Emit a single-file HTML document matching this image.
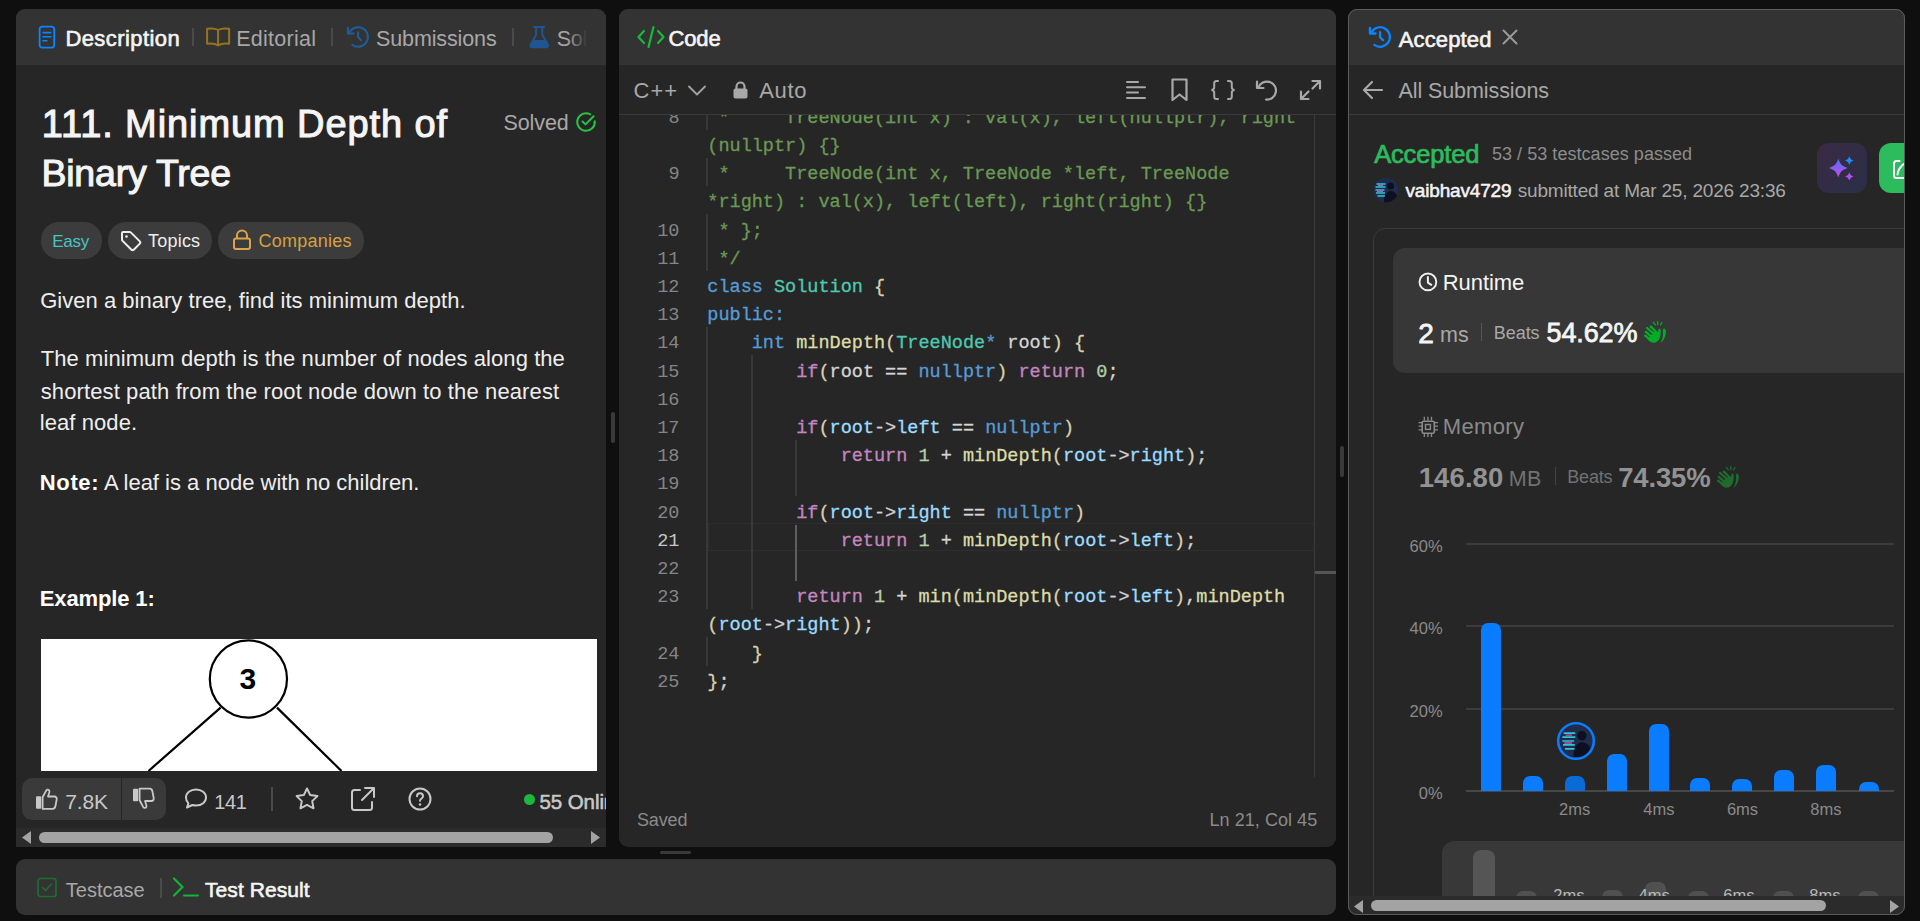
<!DOCTYPE html>
<html><head><meta charset="utf-8"><title>LeetCode</title>
<style>
html,body{margin:0;padding:0;width:1920px;height:921px;overflow:hidden;background:#0f0f0f;font-family:"Liberation Sans",sans-serif;}
.r{position:absolute;box-sizing:border-box;}
.t{position:absolute;white-space:pre;line-height:1;}
.cd span{-webkit-text-stroke:0.3px currentColor;}
</style></head><body>

<div class="r" style="left:16px;top:9px;width:590px;height:838px;background:#262626;border-radius:9px 9px 0 0;overflow:hidden;"></div>
<div class="r" style="left:16px;top:9px;width:590px;height:56px;background:#333333;border-radius:9px 9px 0 0;"></div>
<div class="r" style="left:16px;top:828px;width:590px;height:19px;background:#2b2b2b;"></div>
<svg class="r" style="left:38px;top:25px;" width="18" height="24" viewBox="0 0 18 24" fill="none"><rect x="1.6" y="1.7" width="14.6" height="21" rx="2.6" stroke="#0a84ff" stroke-width="1.8"/><path d="M5 7.6h7.8M5 11.75h7.8M5 15.8h3.9" stroke="#0a84ff" stroke-width="1.6" stroke-linecap="round"/></svg>
<div class="t" style="left:65.40px;top:28.37px;font-size:22px;letter-spacing:0.427px;color:#f5f5f5;font-weight:400;-webkit-text-stroke:0.62px #f5f5f5;">Description</div>
<div class="r" style="left:192px;top:28px;width:2px;height:18px;background:#4a4a4a;"></div>
<svg class="r" style="left:205px;top:27px;" width="26" height="21" viewBox="0 0 26 21" fill="none"><path d="M13.1 3C10 1.2 6 1.2 2.1 1.8V16.7C6 16.2 10 16.4 13.1 18.4 16.2 16.4 20.2 16.2 24.1 16.7V1.8C20.2 1.2 16.2 1.2 13.1 3ZM13.1 3V18.4" stroke="#94741f" stroke-width="2" stroke-linejoin="round"/></svg>
<div class="t" style="left:236.23px;top:28.80px;font-size:21.5px;letter-spacing:0.257px;color:#a8a8a8;font-weight:400;">Editorial</div>
<div class="r" style="left:331px;top:28px;width:2px;height:18px;background:#4a4a4a;"></div>
<svg class="r" style="left:340px;top:20px;" width="30" height="30" viewBox="0 0 30 30" fill="none"><path d="M9.61 12.1A9.8 9.8 0 1 1 12.34 24.93" stroke="#1f5c9c" stroke-width="2.1" stroke-linecap="round"/><path d="M7.9 7.9V13.5H13.6" stroke="#1f5c9c" stroke-width="2.1" stroke-linecap="round" stroke-linejoin="round"/><path d="M18.1 12.2V17.2L21 20.1" stroke="#1f5c9c" stroke-width="2.1" stroke-linecap="round" stroke-linejoin="round"/></svg>
<div class="t" style="left:376.03px;top:28.80px;font-size:21.5px;letter-spacing:-0.119px;color:#a8a8a8;font-weight:400;">Submissions</div>
<div class="r" style="left:512px;top:28px;width:2px;height:18px;background:#4a4a4a;"></div>
<svg class="r" style="left:520px;top:20px;" width="40" height="34" viewBox="0 0 40 34" fill="none"><path d="M14 7H24.2" stroke="#1f5592" stroke-width="2" stroke-linecap="round"/><path d="M16.1 7.5V14.8L10.8 24.5C10 26 10.8 27.2 12.4 27.2H26.2C27.8 27.2 28.6 26 27.8 24.5L22.3 14.8V7.5" stroke="#1f5592" stroke-width="2" stroke-linejoin="round"/><path d="M13.6 19.9H24.8L28.3 25.2C29 26.5 28.1 27.9 26.5 27.9H12C10.4 27.9 9.6 26.5 10.3 25.2Z" fill="#1f5592"/></svg>
<div class="t" style="left:556.63px;top:28.80px;font-size:21.5px;letter-spacing:-0.124px;color:#a8a8a8;font-weight:400;">Sol</div>
<div class="r" style="left:566px;top:15px;width:40px;height:45px;background:linear-gradient(90deg,rgba(51,51,51,0) 0px,rgba(51,51,51,0.5) 12px,#333 21px);"></div>
<div class="t" style="left:41.68px;top:105.03px;font-size:38px;letter-spacing:0.914px;color:#f5f5f5;font-weight:400;-webkit-text-stroke:1.06px #f5f5f5;">111. Minimum Depth of</div>
<div class="t" style="left:41.43px;top:154.65px;font-size:37.5px;letter-spacing:-0.208px;color:#f5f5f5;font-weight:400;-webkit-text-stroke:1.05px #f5f5f5;">Binary Tree</div>
<div class="t" style="left:503.43px;top:112.70px;font-size:21.5px;letter-spacing:-0.085px;color:#a8a8a8;font-weight:400;">Solved</div>
<svg class="r" style="left:570px;top:106px;" width="32" height="32" viewBox="0 0 32 32" fill="none"><path d="M24.77 15.23A8.8 8.8 0 1 1 20.27 8.3" stroke="#28c244" stroke-width="2" stroke-linecap="round"/><path d="M12.5 15.5l3 2.9 8.1-8.15" stroke="#28c244" stroke-width="2" stroke-linecap="round" stroke-linejoin="round"/></svg>
<div class="r" style="left:41px;top:222px;width:61px;height:37px;background:#3c3c3c;border-radius:18px;"></div>
<div class="t" style="left:52.30px;top:233.01px;font-size:17px;letter-spacing:-0.279px;color:#46c6c2;font-weight:400;">Easy</div>
<div class="r" style="left:108px;top:222px;width:104px;height:37px;background:#3c3c3c;border-radius:18px;"></div>
<svg class="r" style="left:120px;top:230px;" width="22" height="22" viewBox="0 0 22 22" fill="none"><path d="M2 3.2v6.3c0 .5.2 1 .6 1.4l8.6 8.6c.8.8 2 .8 2.8 0l5.6-5.6c.8-.8.8-2 0-2.8L11 2.6c-.4-.4-.9-.6-1.4-.6H3.2C2.5 2 2 2.5 2 3.2z" stroke="#eee" stroke-width="2"/><circle cx="6.5" cy="6.5" r="1.3" fill="#eee"/></svg>
<div class="t" style="left:148.09px;top:232.16px;font-size:18px;letter-spacing:0.201px;color:#eeeeee;font-weight:400;">Topics</div>
<div class="r" style="left:218px;top:222px;width:146px;height:37px;background:#3c3c3c;border-radius:18px;"></div>
<svg class="r" style="left:232px;top:229px;" width="20" height="22" viewBox="0 0 20 22" fill="none"><path d="M5 9.5V6.5a5 5 0 0 1 10 0v3" stroke="#dca449" stroke-width="2"/><rect x="2" y="9.5" width="16" height="10.5" rx="2" stroke="#dca449" stroke-width="2"/></svg>
<div class="t" style="left:258.40px;top:232.16px;font-size:18px;letter-spacing:0.249px;color:#d9a040;font-weight:400;">Companies</div>
<div class="t" style="left:40.20px;top:290.07px;font-size:22px;letter-spacing:0.025px;color:#eeeeee;font-weight:400;">Given a binary tree, find its minimum depth.</div>
<div class="t" style="left:40.80px;top:347.67px;font-size:22px;letter-spacing:0.063px;color:#eeeeee;font-weight:400;">The minimum depth is the number of nodes along the</div>
<div class="t" style="left:40.70px;top:381.27px;font-size:22px;letter-spacing:0.118px;color:#eeeeee;font-weight:400;">shortest path from the root node down to the nearest</div>
<div class="t" style="left:39.81px;top:412.37px;font-size:22px;letter-spacing:0.070px;color:#eeeeee;font-weight:400;">leaf node.</div>
<div class="t" style="left:39.81px;top:471.57px;font-size:22px;letter-spacing:0.641px;color:#ffffff;font-weight:700;">Note:</div>
<div class="t" style="left:103.94px;top:471.57px;font-size:22px;letter-spacing:0.000px;color:#eeeeee;font-weight:400;">A leaf is a node with no children.</div>
<div class="t" style="left:39.81px;top:588.07px;font-size:22px;letter-spacing:-0.132px;color:#ffffff;font-weight:700;">Example 1:</div>
<div class="r" style="left:41px;top:639px;width:556px;height:132px;background:#ffffff;"></div>
<svg class="r" style="left:41px;top:639px;" width="556" height="132" viewBox="0 0 556 132" fill="none"><circle cx="207.4" cy="40" r="38.6" stroke="#000" stroke-width="2.2"/><path d="M179.6 68.6L107.5 132M236 68.6L300.5 132" stroke="#000" stroke-width="2.2"/></svg>
<div class="t" style="left:239.52px;top:663.90px;font-size:30px;letter-spacing:0.475px;color:#000000;font-weight:700;">3</div>
<div class="r" style="left:22px;top:778px;width:144px;height:42px;background:#3a3a3a;border-radius:10px;"></div>
<div class="r" style="left:121px;top:778px;width:1px;height:42px;background:#262626;"></div>
<svg class="r" style="left:34px;top:786px;" width="26" height="26" viewBox="0 0 26 26" fill="none"><rect x="2" y="10.3" width="5.2" height="12.5" rx="1" fill="#c8c8c8"/><path d="M8.6 11.2L12.3 4.4C13 3.2 14.8 3.3 15.3 4.6 15.6 5.5 15.4 6.5 15 7.5L14 10.5H20.5C22 10.5 23 11.8 22.7 13.3L21.4 20.3C21.1 21.7 20 22.8 18.6 22.8H8.6Z" stroke="#c8c8c8" stroke-width="1.8" stroke-linejoin="round"/></svg>
<div class="t" style="left:65.25px;top:791.12px;font-size:21px;letter-spacing:-0.132px;color:#c8c8c8;font-weight:400;">7.8K</div>
<svg class="r" style="left:131px;top:783px;" width="26" height="28" viewBox="0 0 26 28" fill="none"><g transform="translate(0,28.5) scale(1,-1)"><rect x="2" y="10.3" width="5.2" height="12.5" rx="1" fill="#c8c8c8"/><path d="M8.6 11.2L12.3 4.4C13 3.2 14.8 3.3 15.3 4.6 15.6 5.5 15.4 6.5 15 7.5L14 10.5H20.5C22 10.5 23 11.8 22.7 13.3L21.4 20.3C21.1 21.7 20 22.8 18.6 22.8H8.6Z" stroke="#c8c8c8" stroke-width="1.8" stroke-linejoin="round"/></g></svg>
<svg class="r" style="left:184px;top:787px;" width="26" height="24" viewBox="0 0 26 24" fill="none"><path d="M12 2.5c5.8 0 10 3.6 10 8s-4.2 8-10 8c-1.3 0-2.6-.2-3.7-.5L3 20.5l1.4-4.1C2.9 14.9 2 12.8 2 10.5c0-4.4 4.2-8 10-8z" stroke="#c8c8c8" stroke-width="2" stroke-linejoin="round"/></svg>
<div class="t" style="left:214.20px;top:791.97px;font-size:20px;letter-spacing:-0.400px;color:#c8c8c8;font-weight:400;">141</div>
<div class="r" style="left:271px;top:787px;width:2px;height:24px;background:#4a4a4a;"></div>
<svg class="r" style="left:294px;top:786px;" width="26" height="26" viewBox="0 0 26 26" fill="none"><path d="M13 2.5l3.2 6.6 7.2 1-5.2 5 1.3 7.2L13 18.9l-6.5 3.4 1.3-7.2-5.2-5 7.2-1z" stroke="#c8c8c8" stroke-width="2" stroke-linejoin="round"/></svg>
<svg class="r" style="left:350px;top:786px;" width="26" height="26" viewBox="0 0 26 26" fill="none"><path d="M10 4H4.5C3.1 4 2 5.1 2 6.5v15C2 22.9 3.1 24 4.5 24h15c1.4 0 2.5-1.1 2.5-2.5V16M15 2h9v9M24 2L12 14" stroke="#c8c8c8" stroke-width="2" stroke-linecap="round" stroke-linejoin="round"/></svg>
<svg class="r" style="left:407px;top:786px;" width="26" height="26" viewBox="0 0 26 26" fill="none"><circle cx="13" cy="13" r="10.5" stroke="#c8c8c8" stroke-width="2"/><path d="M10 10.2c0-1.7 1.3-3 3-3s3 1.3 3 3c0 2.2-3 2.3-3 4.6" stroke="#c8c8c8" stroke-width="2" stroke-linecap="round"/><circle cx="13" cy="18.5" r="1.2" fill="#c8c8c8"/></svg>
<div class="r" style="left:524px;top:794px;width:11px;height:11px;background:#1cb83e;border-radius:50%;"></div>
<div class="r" style="left:536px;top:780px;width:70px;height:40px;overflow:hidden;">
<div class="t" style="left:3.46px;top:11.54px;font-size:20.5px;letter-spacing:-0.077px;color:#c8c8c8;font-weight:400;-webkit-text-stroke:0.57px #c8c8c8;">55 Online</div>
</div>
<svg class="r" style="left:22px;top:831px;" width="10" height="13" viewBox="0 0 10 13" fill="none"><path d="M9 0v13L0 6.5z" fill="#a3a3a3"/></svg>
<div class="r" style="left:39px;top:832px;width:514px;height:11px;background:#a3a3a3;border-radius:6px;"></div>
<svg class="r" style="left:591px;top:831px;" width="10" height="13" viewBox="0 0 10 13" fill="none"><path d="M0 0v13L9 6.5z" fill="#a3a3a3"/></svg>
<div class="r" style="left:611px;top:412px;width:4px;height:31px;background:#3a3a3a;border-radius:2px;"></div>
<div class="r" style="left:1340px;top:446px;width:4px;height:31px;background:#3a3a3a;border-radius:2px;"></div>
<div class="r" style="left:660px;top:851px;width:31px;height:3px;background:#3a3a3a;border-radius:2px;"></div>
<div class="r" style="left:16px;top:859px;width:1320px;height:56px;background:#333333;border-radius:9px;"></div>
<svg class="r" style="left:37px;top:877px;" width="20" height="21" viewBox="0 0 20 21" fill="none"><rect x="1" y="1.5" width="18" height="18" rx="2.5" stroke="#1b6e30" stroke-width="1.7"/><path d="M5.5 10.5l3 3 6-6.5" stroke="#1b6e30" stroke-width="1.7" stroke-linecap="round" stroke-linejoin="round"/></svg>
<div class="t" style="left:65.85px;top:880.17px;font-size:20px;letter-spacing:-0.014px;color:#a8a8a8;font-weight:400;">Testcase</div>
<div class="r" style="left:160px;top:878px;width:2px;height:20px;background:#4a4a4a;"></div>
<svg class="r" style="left:172px;top:877px;" width="28" height="22" viewBox="0 0 28 22" fill="none"><path d="M2 1.5l8.5 8.5-8.5 8.5" stroke="#10b536" stroke-width="2.2" stroke-linecap="round" stroke-linejoin="round"/><path d="M12 18.5h14" stroke="#10b536" stroke-width="2.2" stroke-linecap="round"/></svg>
<div class="t" style="left:205.02px;top:879.32px;font-size:21px;letter-spacing:0.080px;color:#f5f5f5;font-weight:400;-webkit-text-stroke:0.59px #f5f5f5;">Test Result</div>
<div class="r" style="left:619px;top:9px;width:717px;height:838px;background:#262626;border-radius:9px;overflow:hidden;"></div>
<div class="r" style="left:619px;top:9px;width:717px;height:56px;background:#333333;border-radius:9px 9px 0 0;"></div>
<svg class="r" style="left:636px;top:25px;" width="30" height="24" viewBox="0 0 30 24" fill="none"><path d="M8 6L2.5 12 8 18M22 6l5.5 6L22 18M17.5 2L12.5 22" stroke="#1bb83a" stroke-width="2.2" stroke-linecap="round" stroke-linejoin="round"/></svg>
<div class="t" style="left:668.51px;top:27.77px;font-size:22px;letter-spacing:-0.155px;color:#f5f5f5;font-weight:400;-webkit-text-stroke:0.62px #f5f5f5;">Code</div>
<div class="t" style="left:633.50px;top:80.27px;font-size:22px;letter-spacing:1.010px;color:#a8a8a8;font-weight:400;">C++</div>
<svg class="r" style="left:688px;top:85px;" width="18" height="11" viewBox="0 0 18 11" fill="none"><path d="M1 1.5l8 8 8-8" stroke="#a3a3a3" stroke-width="1.8" stroke-linecap="round" stroke-linejoin="round"/></svg>
<svg class="r" style="left:733px;top:81px;" width="15" height="18" viewBox="0 0 15 18" fill="none"><path d="M3.5 8V5.5a4 4 0 0 1 8 0V8" stroke="#a8a8a8" stroke-width="2.2"/><rect x="0.5" y="7.5" width="14" height="10" rx="2" fill="#a8a8a8"/></svg>
<div class="t" style="left:759.25px;top:80.27px;font-size:22px;letter-spacing:0.642px;color:#a8a8a8;font-weight:400;">Auto</div>
<svg class="r" style="left:1125px;top:79px;" width="22" height="22" viewBox="0 0 22 22" fill="none"><path d="M2 3h11M2 8.3h18M2 13.6h11M2 19h18" stroke="#a8a8a8" stroke-width="2" stroke-linecap="round"/></svg>
<svg class="r" style="left:1170px;top:77px;" width="20" height="26" viewBox="0 0 20 26" fill="none"><path d="M2.5 2.5h14v20.5l-7-5.5-7 5.5z" stroke="#a8a8a8" stroke-width="2.2" stroke-linejoin="round"/></svg>
<svg class="r" style="left:1209px;top:79px;" width="28" height="22" viewBox="0 0 28 22" fill="none"><path d="M9 2H7.5C6 2 5.2 3 5.2 4.5v3.8c0 1.3-.8 2.4-2.7 2.7 1.9.3 2.7 1.4 2.7 2.7v3.8C5.2 19 6 20 7.5 20H9M19 2h1.5C22 2 22.8 3 22.8 4.5v3.8c0 1.3.8 2.4 2.7 2.7-1.9.3-2.7 1.4-2.7 2.7v3.8C22.8 19 22 20 20.5 20H19" stroke="#a8a8a8" stroke-width="2" stroke-linecap="round"/></svg>
<svg class="r" style="left:1254px;top:78px;" width="24" height="24" viewBox="0 0 24 24" fill="none"><path d="M4.5 9.5A9 9 0 1 1 12 21.5" stroke="#a8a8a8" stroke-width="2.2" stroke-linecap="round"/><path d="M3 3.5v6.5h6.5" stroke="#a8a8a8" stroke-width="2.2" stroke-linecap="round" stroke-linejoin="round"/></svg>
<svg class="r" style="left:1299px;top:79px;" width="23" height="22" viewBox="0 0 23 22" fill="none"><path d="M13.5 2h7.5v7.5M21 2l-7.5 7.5M9.5 20H2v-7.5M2 20l7.5-7.5" stroke="#a8a8a8" stroke-width="2.2" stroke-linecap="round" stroke-linejoin="round"/></svg>
<div class="r" style="left:619px;top:114px;width:717px;height:1px;background:#3a3a3a;"></div>
<div class="r" style="left:619px;top:115px;width:696px;height:662px;overflow:hidden;">
<div class="r" style="left:88.79999999999995px;top:408.1px;width:607.2px;height:28.200000000000045px;background:transparent;border:1px solid #2e2e2e;"></div>
<div class="r" style="left:87px;top:-13.400000000000006px;width:2px;height:28.19999999999999px;background:#383838;"></div>
<div class="r" style="left:87px;top:43.0px;width:2px;height:28.19999999999999px;background:#383838;"></div>
<div class="r" style="left:87px;top:99.39999999999998px;width:2px;height:56.39999999999998px;background:#383838;"></div>
<div class="r" style="left:87px;top:212.2px;width:2px;height:281.99999999999994px;background:#383838;"></div>
<div class="r" style="left:87px;top:522.4px;width:2px;height:28.200000000000045px;background:#383838;"></div>
<div class="r" style="left:132px;top:240.39999999999998px;width:2px;height:253.79999999999995px;background:#383838;"></div>
<div class="r" style="left:176px;top:325.0px;width:2px;height:56.39999999999998px;background:#383838;"></div>
<div class="r" style="left:176px;top:409.6px;width:2px;height:56.39999999999998px;background:#5e5e5e;"></div>
<div class="t" style="left:49.38px;top:-5.25px;font-family:'Liberation Mono',monospace;font-size:18.539px;color:#858585">8</div>
<div class="t cd" style="left:88.30px;top:-5.25px;font-family:'Liberation Mono',monospace;font-size:18.539px;"><span style="color:#6a9955"> *     TreeNode(int x) : val(x), left(nullptr), right</span></div>
<div class="t cd" style="left:88.30px;top:22.95px;font-family:'Liberation Mono',monospace;font-size:18.539px;"><span style="color:#6a9955">(nullptr) {}</span></div>
<div class="t" style="left:49.38px;top:51.15px;font-family:'Liberation Mono',monospace;font-size:18.539px;color:#858585">9</div>
<div class="t cd" style="left:88.30px;top:51.15px;font-family:'Liberation Mono',monospace;font-size:18.539px;"><span style="color:#6a9955"> *     TreeNode(int x, TreeNode *left, TreeNode</span></div>
<div class="t cd" style="left:88.30px;top:79.35px;font-family:'Liberation Mono',monospace;font-size:18.539px;"><span style="color:#6a9955">*right) : val(x), left(left), right(right) {}</span></div>
<div class="t" style="left:38.25px;top:107.55px;font-family:'Liberation Mono',monospace;font-size:18.539px;color:#858585">10</div>
<div class="t cd" style="left:88.30px;top:107.55px;font-family:'Liberation Mono',monospace;font-size:18.539px;"><span style="color:#6a9955"> * };</span></div>
<div class="t" style="left:38.25px;top:135.75px;font-family:'Liberation Mono',monospace;font-size:18.539px;color:#858585">11</div>
<div class="t cd" style="left:88.30px;top:135.75px;font-family:'Liberation Mono',monospace;font-size:18.539px;"><span style="color:#6a9955"> */</span></div>
<div class="t" style="left:38.25px;top:163.95px;font-family:'Liberation Mono',monospace;font-size:18.539px;color:#858585">12</div>
<div class="t cd" style="left:88.30px;top:163.95px;font-family:'Liberation Mono',monospace;font-size:18.539px;"><span style="color:#569cd6">class</span><span style="color:#d4d4d4"> </span><span style="color:#4ec9b0">Solution</span><span style="color:#d4d4d4"> </span><span style="color:#dccfae">{</span></div>
<div class="t" style="left:38.25px;top:192.15px;font-family:'Liberation Mono',monospace;font-size:18.539px;color:#858585">13</div>
<div class="t cd" style="left:88.30px;top:192.15px;font-family:'Liberation Mono',monospace;font-size:18.539px;"><span style="color:#569cd6">public</span><span style="color:#569cd6">:</span></div>
<div class="t" style="left:38.25px;top:220.35px;font-family:'Liberation Mono',monospace;font-size:18.539px;color:#858585">14</div>
<div class="t cd" style="left:88.30px;top:220.35px;font-family:'Liberation Mono',monospace;font-size:18.539px;"><span style="color:#d4d4d4">    </span><span style="color:#569cd6">int</span><span style="color:#d4d4d4"> </span><span style="color:#dcdcaa">minDepth</span><span style="color:#dccfae">(</span><span style="color:#4ec9b0">TreeNode</span><span style="color:#569cd6">*</span><span style="color:#d4d4d4"> root</span><span style="color:#dccfae">)</span><span style="color:#d4d4d4"> </span><span style="color:#dccfae">{</span></div>
<div class="t" style="left:38.25px;top:248.55px;font-family:'Liberation Mono',monospace;font-size:18.539px;color:#858585">15</div>
<div class="t cd" style="left:88.30px;top:248.55px;font-family:'Liberation Mono',monospace;font-size:18.539px;"><span style="color:#d4d4d4">        </span><span style="color:#c586c0">if</span><span style="color:#dccfae">(</span><span style="color:#d4d4d4">root</span><span style="color:#d4d4d4"> == </span><span style="color:#569cd6">nullptr</span><span style="color:#dccfae">)</span><span style="color:#d4d4d4"> </span><span style="color:#c586c0">return</span><span style="color:#d4d4d4"> </span><span style="color:#b5cea8">0</span><span style="color:#d4d4d4">;</span></div>
<div class="t" style="left:38.25px;top:276.75px;font-family:'Liberation Mono',monospace;font-size:18.539px;color:#858585">16</div>
<div class="t" style="left:38.25px;top:304.95px;font-family:'Liberation Mono',monospace;font-size:18.539px;color:#858585">17</div>
<div class="t cd" style="left:88.30px;top:304.95px;font-family:'Liberation Mono',monospace;font-size:18.539px;"><span style="color:#d4d4d4">        </span><span style="color:#c586c0">if</span><span style="color:#dccfae">(</span><span style="color:#9cdcfe">root</span><span style="color:#d4d4d4">-&gt;</span><span style="color:#9cdcfe">left</span><span style="color:#d4d4d4"> == </span><span style="color:#569cd6">nullptr</span><span style="color:#dccfae">)</span></div>
<div class="t" style="left:38.25px;top:333.15px;font-family:'Liberation Mono',monospace;font-size:18.539px;color:#858585">18</div>
<div class="t cd" style="left:88.30px;top:333.15px;font-family:'Liberation Mono',monospace;font-size:18.539px;"><span style="color:#d4d4d4">            </span><span style="color:#c586c0">return</span><span style="color:#d4d4d4"> </span><span style="color:#b5cea8">1</span><span style="color:#d4d4d4"> + </span><span style="color:#dcdcaa">minDepth</span><span style="color:#dccfae">(</span><span style="color:#9cdcfe">root</span><span style="color:#d4d4d4">-&gt;</span><span style="color:#9cdcfe">right</span><span style="color:#dccfae">)</span><span style="color:#d4d4d4">;</span></div>
<div class="t" style="left:38.25px;top:361.35px;font-family:'Liberation Mono',monospace;font-size:18.539px;color:#858585">19</div>
<div class="t" style="left:38.25px;top:389.55px;font-family:'Liberation Mono',monospace;font-size:18.539px;color:#858585">20</div>
<div class="t cd" style="left:88.30px;top:389.55px;font-family:'Liberation Mono',monospace;font-size:18.539px;"><span style="color:#d4d4d4">        </span><span style="color:#c586c0">if</span><span style="color:#dccfae">(</span><span style="color:#9cdcfe">root</span><span style="color:#d4d4d4">-&gt;</span><span style="color:#9cdcfe">right</span><span style="color:#d4d4d4"> == </span><span style="color:#569cd6">nullptr</span><span style="color:#dccfae">)</span></div>
<div class="t" style="left:38.25px;top:417.75px;font-family:'Liberation Mono',monospace;font-size:18.539px;color:#c6c6c6">21</div>
<div class="t cd" style="left:88.30px;top:417.75px;font-family:'Liberation Mono',monospace;font-size:18.539px;"><span style="color:#d4d4d4">            </span><span style="color:#c586c0">return</span><span style="color:#d4d4d4"> </span><span style="color:#b5cea8">1</span><span style="color:#d4d4d4"> + </span><span style="color:#dcdcaa">minDepth</span><span style="color:#dccfae">(</span><span style="color:#9cdcfe">root</span><span style="color:#d4d4d4">-&gt;</span><span style="color:#9cdcfe">left</span><span style="color:#dccfae">)</span><span style="color:#d4d4d4">;</span></div>
<div class="t" style="left:38.25px;top:445.95px;font-family:'Liberation Mono',monospace;font-size:18.539px;color:#858585">22</div>
<div class="t" style="left:38.25px;top:474.15px;font-family:'Liberation Mono',monospace;font-size:18.539px;color:#858585">23</div>
<div class="t cd" style="left:88.30px;top:474.15px;font-family:'Liberation Mono',monospace;font-size:18.539px;"><span style="color:#d4d4d4">        </span><span style="color:#c586c0">return</span><span style="color:#d4d4d4"> </span><span style="color:#b5cea8">1</span><span style="color:#d4d4d4"> + </span><span style="color:#dcdcaa">min</span><span style="color:#dccfae">(</span><span style="color:#dcdcaa">minDepth</span><span style="color:#dccfae">(</span><span style="color:#9cdcfe">root</span><span style="color:#d4d4d4">-&gt;</span><span style="color:#9cdcfe">left</span><span style="color:#dccfae">)</span><span style="color:#d4d4d4">,</span><span style="color:#dcdcaa">minDepth</span></div>
<div class="t cd" style="left:88.30px;top:502.35px;font-family:'Liberation Mono',monospace;font-size:18.539px;"><span style="color:#dccfae">(</span><span style="color:#9cdcfe">root</span><span style="color:#d4d4d4">-&gt;</span><span style="color:#9cdcfe">right</span><span style="color:#dccfae">)</span><span style="color:#dccfae">)</span><span style="color:#d4d4d4">;</span></div>
<div class="t" style="left:38.25px;top:530.55px;font-family:'Liberation Mono',monospace;font-size:18.539px;color:#858585">24</div>
<div class="t cd" style="left:88.30px;top:530.55px;font-family:'Liberation Mono',monospace;font-size:18.539px;"><span style="color:#d4d4d4">    </span><span style="color:#dccfae">}</span></div>
<div class="t" style="left:38.25px;top:558.75px;font-family:'Liberation Mono',monospace;font-size:18.539px;color:#858585">25</div>
<div class="t cd" style="left:88.30px;top:558.75px;font-family:'Liberation Mono',monospace;font-size:18.539px;"><span style="color:#dccfae">}</span><span style="color:#d4d4d4">;</span></div>
</div>
<div class="r" style="left:1314px;top:115px;width:1px;height:662px;background:#3a3a3a;"></div>
<div class="r" style="left:1315px;top:571px;width:21px;height:3px;background:#555555;"></div>
<div class="t" style="left:636.89px;top:811.26px;font-size:18px;letter-spacing:-0.124px;color:#8a8a8a;font-weight:400;">Saved</div>
<div class="t" style="left:1209.52px;top:811.26px;font-size:18px;letter-spacing:0.046px;color:#8a8a8a;font-weight:400;">Ln 21, Col 45</div>
<div class="r" style="left:1348px;top:9px;width:557px;height:906px;border-radius:9px;overflow:hidden;background:#262626;">
<div class="r" style="left:0px;top:0px;width:557px;height:56px;background:#333333;"></div>
<svg class="r" style="left:14px;top:11px;" width="30" height="30" viewBox="0 0 30 30" fill="none"><path d="M9.61 12.1A9.8 9.8 0 1 1 12.34 24.93" stroke="#0a84ff" stroke-width="2.3" stroke-linecap="round"/><path d="M7.9 7.9V13.5H13.6" stroke="#0a84ff" stroke-width="2.3" stroke-linecap="round" stroke-linejoin="round"/><path d="M18.1 12.2V17.2L21 20.1" stroke="#0a84ff" stroke-width="2.3" stroke-linecap="round" stroke-linejoin="round"/></svg>
<div class="t" style="left:50.76px;top:19.67px;font-size:22px;letter-spacing:0.132px;color:#f5f5f5;font-weight:400;-webkit-text-stroke:0.62px #f5f5f5;">Accepted</div>
<svg class="r" style="left:154px;top:20px;" width="16" height="16" viewBox="0 0 16 16" fill="none"><path d="M1.5 1.5l13 13M14.5 1.5l-13 13" stroke="#9a9a9a" stroke-width="2" stroke-linecap="round"/></svg>
<svg class="r" style="left:14px;top:71px;" width="22" height="20" viewBox="0 0 22 20" fill="none"><path d="M20 10H2.5M10 2L2 10l8 8" stroke="#a8a8a8" stroke-width="2.2" stroke-linecap="round" stroke-linejoin="round"/></svg>
<div class="t" style="left:50.45px;top:71.70px;font-size:21.5px;letter-spacing:-0.081px;color:#a8a8a8;font-weight:400;">All Submissions</div>
<div class="r" style="left:0px;top:105px;width:557px;height:1px;background:#3a3a3a;"></div>
<div class="t" style="left:26.19px;top:132.61px;font-size:25.5px;letter-spacing:-0.161px;color:#2cbb5d;font-weight:400;-webkit-text-stroke:0.71px #2cbb5d;">Accepted</div>
<div class="t" style="left:143.98px;top:135.76px;font-size:18px;letter-spacing:0.044px;color:#8c8c8c;font-weight:400;">53 / 53 testcases passed</div>
<svg class="r" style="left:25px;top:168px;" width="26" height="26" viewBox="0 0 26 26" fill="none"><defs><clipPath id="avc"><circle cx="13" cy="13" r="12.5"/></clipPath></defs><g clip-path="url(#avc)"><circle cx="13" cy="13" r="12.5" fill="#1f2c4c"/><path d="M3.5 7h9M2.5 10h10M2.5 13h9M3 16h9M4.5 19h8" stroke="#36c2d2" stroke-width="1.3"/><path d="M5 8.5h5M4 14.5h6" stroke="#c94fb7" stroke-width="1.1"/><circle cx="17.5" cy="9" r="3.6" fill="#0e1022"/><path d="M11 25.5C11 19 13 14 17.5 14S25 18 24.5 22L20 25.5Z" fill="#0e1022"/></g></svg>
<div class="t" style="left:57.42px;top:172.41px;font-size:19px;letter-spacing:-0.156px;color:#f5f5f5;font-weight:400;-webkit-text-stroke:0.53px #f5f5f5;">vaibhav4729</div>
<div class="t" style="left:169.68px;top:172.41px;font-size:19px;letter-spacing:-0.177px;color:#a8a8a8;font-weight:400;">submitted at Mar 25, 2026 23:36</div>
<div class="r" style="left:469px;top:134px;width:50px;height:50px;background:linear-gradient(135deg,#3b2a44,#2a2f48);border-radius:12px;"></div>
<svg class="r" style="left:469px;top:134px;" width="50" height="50" viewBox="0 0 50 50" fill="none"><defs><linearGradient id="sp" x1="0" y1="0" x2="0" y2="1"><stop offset="0" stop-color="#4f6ff5"/><stop offset="1" stop-color="#c24ee6"/></linearGradient></defs><path d="M21.3 15.8C24.06 22.24 24.06 22.24 30.5 25C24.06 27.76 24.06 27.76 21.3 34.2C18.54 27.76 18.54 27.76 12.100000000000001 25C18.54 22.24 18.54 22.24 21.3 15.8Z" fill="url(#sp)"/><path d="M32.3 13.3C33.59 16.31 33.59 16.31 36.599999999999994 17.6C33.59 18.89 33.59 18.89 32.3 21.900000000000002C31.01 18.89 31.01 18.89 27.999999999999996 17.6C31.01 16.31 31.01 16.31 32.3 13.3Z" fill="#1a8cff"/><path d="M32.3 29.2C33.56 32.14 33.56 32.14 36.5 33.4C33.56 34.66 33.56 34.66 32.3 37.6C31.04 34.66 31.04 34.66 28.099999999999998 33.4C31.04 32.14 31.04 32.14 32.3 29.2Z" fill="#b150ee"/></svg>
<div class="r" style="left:531px;top:134px;width:56px;height:50px;background:#2cbb5d;border-radius:12px;"></div>
<svg class="r" style="left:542px;top:148px;" width="20" height="25" viewBox="0 0 20 25" fill="none"><path d="M9.5 4H6.5C5 4 4 5 4 6.5V18.5C4 20 5 21 6.5 21H18.5" stroke="#fff" stroke-width="2" stroke-linecap="round"/><path d="M7.5 17.5C8 13 11 8.5 16 5.5" stroke="#fff" stroke-width="2" stroke-linecap="round"/></svg>
<div class="r" style="left:25px;top:219px;width:562px;height:712px;background:transparent;border:1px solid #3a3a3a;border-radius:12px;"></div>
<div class="r" style="left:45px;top:239px;width:542px;height:125px;background:#373737;border-radius:12px;"></div>
<svg class="r" style="left:69px;top:263px;" width="22" height="22" viewBox="0 0 22 22" fill="none"><circle cx="10.9" cy="9.9" r="8.4" stroke="#f0f0f0" stroke-width="1.9"/><path d="M10.9 4.9V10.6L14.3 12.8" stroke="#f0f0f0" stroke-width="2" stroke-linecap="round" stroke-linejoin="round"/></svg>
<div class="t" style="left:94.78px;top:263.37px;font-size:22px;letter-spacing:-0.057px;color:#f5f5f5;font-weight:400;">Runtime</div>
<div class="t" style="left:70.29px;top:310.59px;font-size:28px;letter-spacing:-0.290px;color:#f5f5f5;font-weight:400;-webkit-text-stroke:0.78px #f5f5f5;">2</div>
<div class="t" style="left:91.90px;top:315.80px;font-size:21.5px;letter-spacing:0.201px;color:#a8a8a8;font-weight:400;">ms</div>
<div class="r" style="left:133px;top:314px;width:1px;height:18px;background:#555555;"></div>
<div class="t" style="left:145.81px;top:314.66px;font-size:18px;letter-spacing:-0.055px;color:#a8a8a8;font-weight:400;">Beats</div>
<div class="t" style="left:198.50px;top:310.84px;font-size:27px;letter-spacing:-0.107px;color:#f5f5f5;font-weight:400;-webkit-text-stroke:0.76px #f5f5f5;">54.62%</div>
<svg class="r" style="left:296px;top:312px;" width="22" height="22" viewBox="0 0 22 22" fill="none"><path d="M15.3 7.6C16.6 7.6 16.9 9.6 16.7 12.3 16.4 17.3 14 21.8 9.8 21.8 7.2 21.8 5.2 20.2 3.6 18.2L9 12 12.5 10.3 14.1 10.9C14.2 9.4 14.5 7.6 15.3 7.6Z" fill="#03ae27"/><path d="M6.8 5.6L12 10.8M3.1 7L9 12.1M1.8 10.9L6.4 14.9M1.1 14.7L5.5 18" stroke="#03ae27" stroke-width="2.3" stroke-linecap="round"/><path d="M19.9 7.4C21.2 7.3 21.9 8.6 21.9 10.6 21.9 15.6 19.6 20 16.2 21.8 18.4 18.9 19.2 15 19 11.2 18.9 9.4 19 7.5 19.9 7.4Z" fill="#03ae27"/><path d="M9.4 1.3L11.3 3.8M13.75 0.6V3.8M17.9 1.5L16.5 3.8" stroke="#03ae27" stroke-width="1.3" stroke-linecap="round"/></svg>
<svg class="r" style="left:69px;top:407px;" width="22" height="22" viewBox="0 0 22 22" fill="none"><rect x="5.2" y="5.2" width="12.1" height="12.1" rx="1.5" stroke="#8a8a8a" stroke-width="1.6"/><rect x="8.5" y="8.5" width="4.9" height="4.9" stroke="#8a8a8a" stroke-width="1.4"/><path d="M7.3 0.8v3.6M10.9 0.8v3.6M14.5 0.8v3.6M7.3 17.6v3.3M10.9 17.6v3.3M14.5 17.6v3.3M1.6 6.6h3.6M1.6 10.2h3.6M1.6 13.8h3.6M17.4 6.6h3.6M17.4 10.2h3.6M17.4 13.8h3.6" stroke="#8a8a8a" stroke-width="1.3"/></svg>
<div class="t" style="left:94.69px;top:407.47px;font-size:22px;letter-spacing:0.379px;color:#8a8a8a;font-weight:400;">Memory</div>
<div class="t" style="left:70.68px;top:454.82px;font-size:27.5px;letter-spacing:0.107px;color:#929292;font-weight:700;">146.80</div>
<div class="t" style="left:160.63px;top:459.80px;font-size:21.5px;letter-spacing:0.552px;color:#727272;font-weight:400;">MB</div>
<div class="r" style="left:207px;top:458px;width:1px;height:18px;background:#444444;"></div>
<div class="t" style="left:219.31px;top:459.06px;font-size:18px;letter-spacing:-0.180px;color:#727272;font-weight:400;">Beats</div>
<div class="t" style="left:270.13px;top:454.72px;font-size:27.5px;letter-spacing:-0.134px;color:#929292;font-weight:700;">74.35%</div>
<svg class="r" style="left:369px;top:457px;" width="22" height="22" viewBox="0 0 22 22" fill="none"><path d="M15.3 7.6C16.6 7.6 16.9 9.6 16.7 12.3 16.4 17.3 14 21.8 9.8 21.8 7.2 21.8 5.2 20.2 3.6 18.2L9 12 12.5 10.3 14.1 10.9C14.2 9.4 14.5 7.6 15.3 7.6Z" fill="#1f6b2c"/><path d="M6.8 5.6L12 10.8M3.1 7L9 12.1M1.8 10.9L6.4 14.9M1.1 14.7L5.5 18" stroke="#1f6b2c" stroke-width="2.3" stroke-linecap="round"/><path d="M19.9 7.4C21.2 7.3 21.9 8.6 21.9 10.6 21.9 15.6 19.6 20 16.2 21.8 18.4 18.9 19.2 15 19 11.2 18.9 9.4 19 7.5 19.9 7.4Z" fill="#1f6b2c"/><path d="M9.4 1.3L11.3 3.8M13.75 0.6V3.8M17.9 1.5L16.5 3.8" stroke="#1f6b2c" stroke-width="1.3" stroke-linecap="round"/></svg>
<div class="r" style="left:118px;top:534px;width:428px;height:2px;background:#3c3c3c;"></div>
<div class="t" style="left:61.54px;top:528.73px;font-size:16.5px;letter-spacing:0.000px;color:#8a8a8a;font-weight:400;">60%</div>
<div class="r" style="left:118px;top:616px;width:428px;height:2px;background:#3c3c3c;"></div>
<div class="t" style="left:61.54px;top:611.43px;font-size:16.5px;letter-spacing:-0.000px;color:#8a8a8a;font-weight:400;">40%</div>
<div class="r" style="left:118px;top:699px;width:428px;height:2px;background:#3c3c3c;"></div>
<div class="t" style="left:61.54px;top:694.23px;font-size:16.5px;letter-spacing:0.000px;color:#8a8a8a;font-weight:400;">20%</div>
<div class="r" style="left:118px;top:781px;width:428px;height:2px;background:#474747;"></div>
<div class="t" style="left:70.73px;top:775.73px;font-size:16.5px;letter-spacing:0.000px;color:#8a8a8a;font-weight:400;">0%</div>
<div class="r" style="left:133px;top:614px;width:20px;height:168px;background:#0a7cff;border-radius:7px 7px 0 0;"></div>
<div class="r" style="left:175px;top:767px;width:20px;height:15px;background:#0a7cff;border-radius:7px 7px 0 0;"></div>
<div class="r" style="left:217px;top:767px;width:20px;height:15px;background:#0a6ad6;border-radius:7px 7px 0 0;"></div>
<div class="r" style="left:259px;top:745px;width:20px;height:37px;background:#0a7cff;border-radius:7px 7px 0 0;"></div>
<div class="r" style="left:301px;top:715px;width:20px;height:67px;background:#0a7cff;border-radius:7px 7px 0 0;"></div>
<div class="r" style="left:342px;top:769px;width:20px;height:13px;background:#0a7cff;border-radius:7px 7px 0 0;"></div>
<div class="r" style="left:384px;top:770px;width:20px;height:12px;background:#0a7cff;border-radius:7px 7px 0 0;"></div>
<div class="r" style="left:426px;top:761px;width:20px;height:21px;background:#0a7cff;border-radius:7px 7px 0 0;"></div>
<div class="r" style="left:468px;top:756px;width:20px;height:26px;background:#0a7cff;border-radius:7px 7px 0 0;"></div>
<div class="r" style="left:511px;top:773px;width:20px;height:9px;background:#0a7cff;border-radius:7px 7px 0 0;"></div>
<svg class="r" style="left:208px;top:712px;" width="40" height="40" viewBox="0 0 40 40" fill="none"><defs><clipPath id="avc2"><circle cx="13" cy="13" r="12.5"/></clipPath></defs><g transform="translate(20,20) scale(1.3) translate(-13,-13)"><g clip-path="url(#avc2)"><circle cx="13" cy="13" r="12.5" fill="#1f2c4c"/><path d="M3.5 7h9M2.5 10h10M2.5 13h9M3 16h9M4.5 19h8" stroke="#36c2d2" stroke-width="1.3"/><path d="M5 8.5h5M4 14.5h6" stroke="#c94fb7" stroke-width="1.1"/><circle cx="17.5" cy="9" r="3.6" fill="#0e1022"/><path d="M11 25.5C11 19 13 14 17.5 14S25 18 24.5 22L20 25.5Z" fill="#0e1022"/></g></g><circle cx="20" cy="20" r="17.8" stroke="#0a7cff" stroke-width="2.6"/></svg>
<div class="t" style="left:210.98px;top:792.03px;font-size:16.5px;letter-spacing:-0.000px;color:#8a8a8a;font-weight:400;">2ms</div>
<div class="t" style="left:295.31px;top:792.03px;font-size:16.5px;letter-spacing:-0.000px;color:#8a8a8a;font-weight:400;">4ms</div>
<div class="t" style="left:378.88px;top:792.03px;font-size:16.5px;letter-spacing:-0.000px;color:#8a8a8a;font-weight:400;">6ms</div>
<div class="t" style="left:462.35px;top:792.03px;font-size:16.5px;letter-spacing:0.000px;color:#8a8a8a;font-weight:400;">8ms</div>
<div class="r" style="left:94px;top:832px;width:493px;height:99px;background:#383838;border-radius:12px;"></div>
<div class="r" style="left:125px;top:841px;width:22px;height:50px;background:#555555;border-radius:8px 8px 0 0;"></div>
<div class="r" style="left:168px;top:882px;width:21px;height:9px;background:#505050;border-radius:7px 7px 0 0;"></div>
<div class="r" style="left:254px;top:881px;width:21px;height:10px;background:#505050;border-radius:7px 7px 0 0;"></div>
<div class="r" style="left:297px;top:873px;width:21px;height:18px;background:#505050;border-radius:7px 7px 0 0;"></div>
<div class="r" style="left:340px;top:882px;width:21px;height:9px;background:#505050;border-radius:7px 7px 0 0;"></div>
<div class="r" style="left:425px;top:882px;width:21px;height:9px;background:#505050;border-radius:7px 7px 0 0;"></div>
<div class="r" style="left:510px;top:882px;width:21px;height:9px;background:#505050;border-radius:7px 7px 0 0;"></div>
<div class="t" style="left:205.28px;top:878.03px;font-size:16.5px;letter-spacing:-0.000px;color:#b8b8b8;font-weight:400;">2ms</div>
<div class="t" style="left:290.51px;top:878.03px;font-size:16.5px;letter-spacing:-0.000px;color:#b8b8b8;font-weight:400;">4ms</div>
<div class="t" style="left:375.28px;top:878.03px;font-size:16.5px;letter-spacing:-0.000px;color:#b8b8b8;font-weight:400;">6ms</div>
<div class="t" style="left:461.35px;top:878.03px;font-size:16.5px;letter-spacing:0.000px;color:#b8b8b8;font-weight:400;">8ms</div>
<div class="r" style="left:0px;top:887px;width:557px;height:19px;background:#2b2b2b;"></div>
<svg class="r" style="left:6px;top:891px;" width="10" height="13" viewBox="0 0 10 13" fill="none"><path d="M9 0v13L0 6.5z" fill="#a3a3a3"/></svg>
<div class="r" style="left:23px;top:891px;width:455px;height:11px;background:#a3a3a3;border-radius:6px;"></div>
<svg class="r" style="left:542px;top:891px;" width="10" height="13" viewBox="0 0 10 13" fill="none"><path d="M0 0v13L9 6.5z" fill="#a3a3a3"/></svg>
</div>
<div class="r" style="left:1348px;top:9px;width:557px;height:906px;background:transparent;border:1px solid #5c5c5c;border-radius:9px;"></div>
</body></html>
